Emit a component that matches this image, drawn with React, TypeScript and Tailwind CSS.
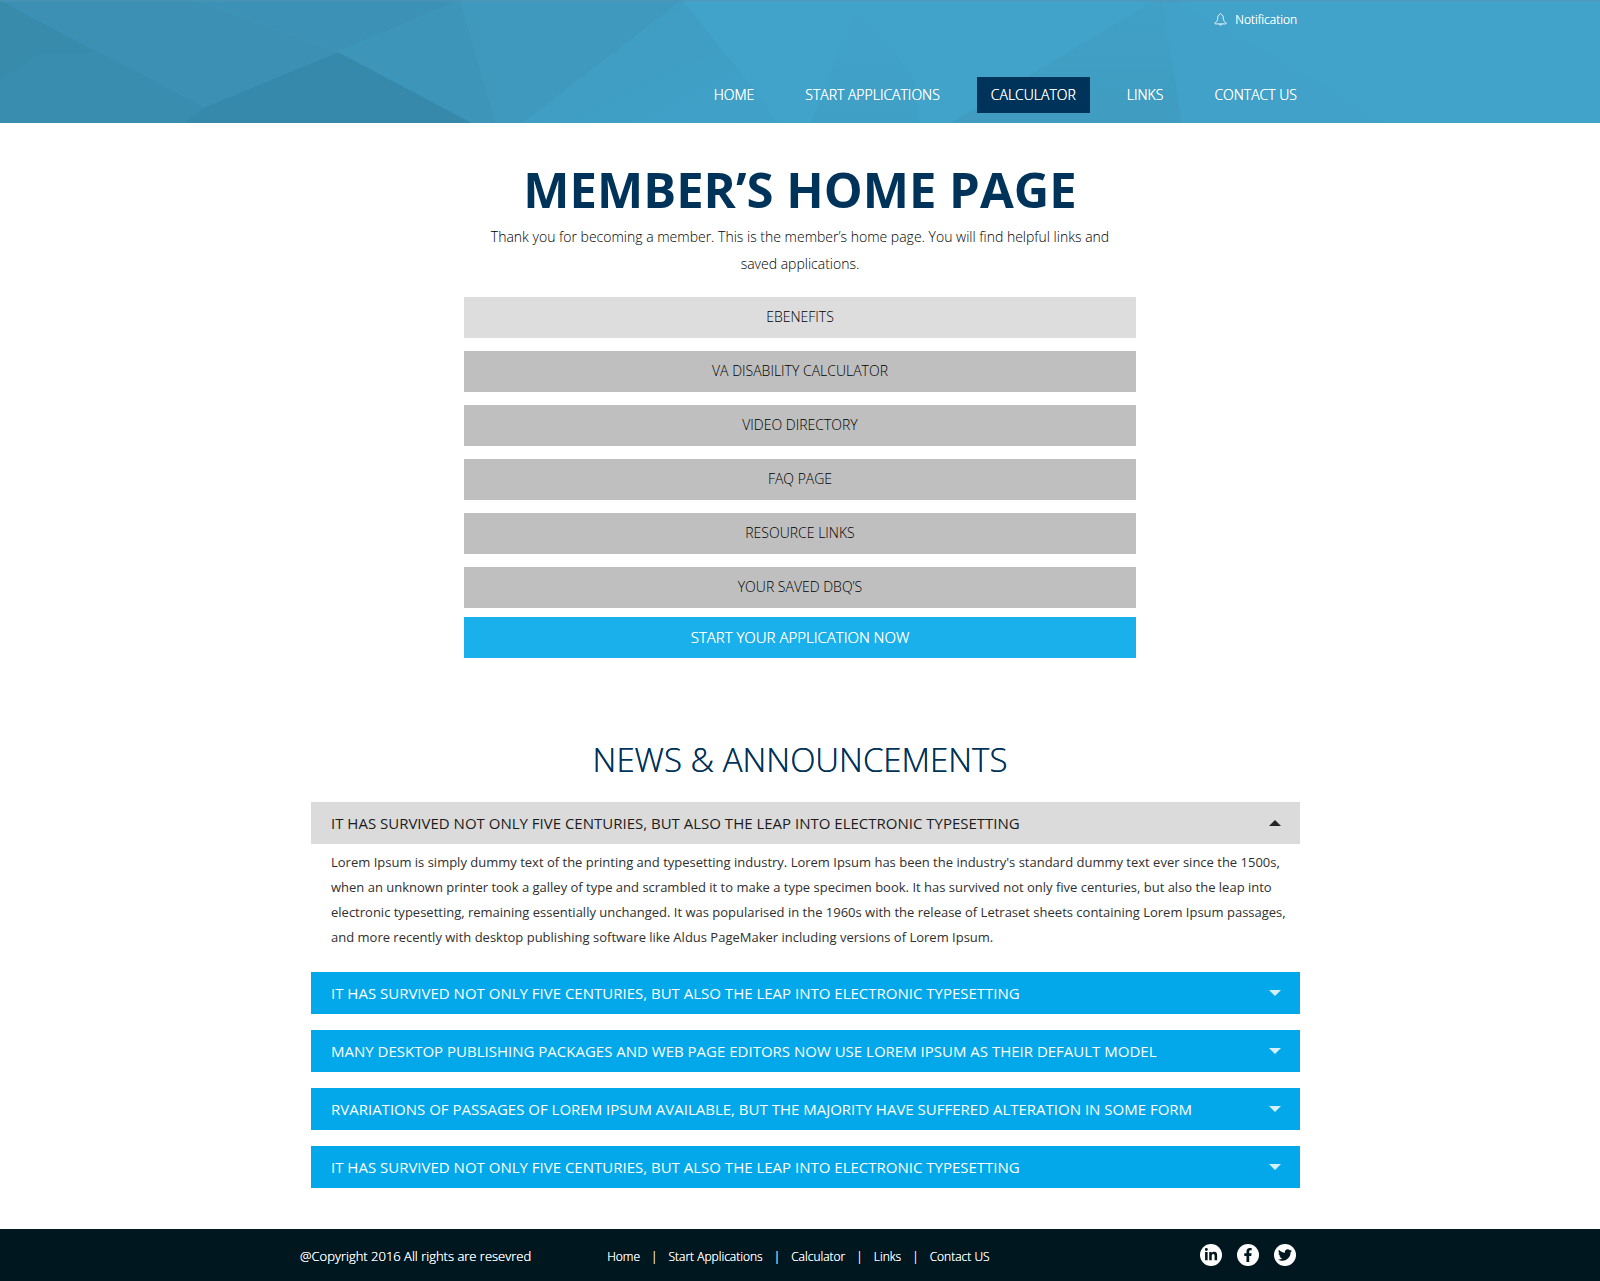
import { useState } from "react";
import { FaFacebookF, FaLinkedinIn, FaTwitter } from "react-icons/fa";

const navItems = [
  { label: "HOME", active: false },
  { label: "START APPLICATIONS", active: false },
  { label: "CALCULATOR", active: true },
  { label: "LINKS", active: false },
  { label: "CONTACT US", active: false },
];

const memberLinks = [
  "EBENEFITS",
  "VA DISABILITY CALCULATOR",
  "VIDEO DIRECTORY",
  "FAQ PAGE",
  "RESOURCE LINKS",
  "YOUR SAVED DBQ’S",
];

const body =
  "Lorem Ipsum is simply dummy text of the printing and typesetting industry. Lorem Ipsum has been the industry's standard dummy text ever since the 1500s, when an unknown printer took a galley of type and scrambled it to make a type specimen book. It has survived not only five centuries, but also the leap into electronic typesetting, remaining essentially unchanged. It was popularised in the 1960s with the release of Letraset sheets containing Lorem Ipsum passages, and more recently with desktop publishing software like Aldus PageMaker including versions of Lorem Ipsum.";

const news = [
  "IT HAS SURVIVED NOT ONLY FIVE CENTURIES, BUT ALSO THE LEAP INTO ELECTRONIC TYPESETTING",
  "IT HAS SURVIVED NOT ONLY FIVE CENTURIES, BUT ALSO THE LEAP INTO ELECTRONIC TYPESETTING",
  "MANY DESKTOP PUBLISHING PACKAGES AND WEB PAGE EDITORS NOW USE LOREM IPSUM AS THEIR DEFAULT MODEL",
  "RVARIATIONS OF PASSAGES OF LOREM IPSUM AVAILABLE, BUT THE MAJORITY HAVE SUFFERED ALTERATION IN SOME FORM",
  "IT HAS SURVIVED NOT ONLY FIVE CENTURIES, BUT ALSO THE LEAP INTO ELECTRONIC TYPESETTING",
];

const footerLinks = ["Home", "Start Applications", "Calculator", "Links", "Contact US"];

const socials = [
  { label: "LinkedIn", Icon: FaLinkedinIn },
  { label: "Facebook", Icon: FaFacebookF },
  { label: "Twitter", Icon: FaTwitter },
];

function Facets() {
  return (
    <svg
      className="absolute inset-0 h-full w-full"
      viewBox="0 0 1600 123"
      preserveAspectRatio="none"
      aria-hidden="true"
    >
      <defs>
        <linearGradient id="slope" x1="0" x2="1" y1="0" y2="1">
          <stop offset="0" stopColor="#409bc0" />
          <stop offset="1" stopColor="#40a1c8" />
        </linearGradient>
        <linearGradient id="shade" x1="0" x2="0" y1="0" y2="1">
          <stop offset="0" stopColor="#42a2c9" />
          <stop offset="1" stopColor="#409fc5" />
        </linearGradient>
        <linearGradient id="fold" x1="0" x2="0" y1="0" y2="1">
          <stop offset="0" stopColor="#41a0c6" />
          <stop offset="1" stopColor="#409cc1" />
        </linearGradient>
      </defs>
      <rect width="1600" height="123" fill="#42a3ca" />
      <polygon points="0,0 205,107 212,123 0,123" fill="#398daf" />
      <polygon points="0,0 95,53 40,53 0,80" fill="#398bac" />
      <polygon points="0,0 195,0 338,52 205,107" fill="#3b90b4" />
      <polygon points="195,0 460,0 338,52" fill="#3c92b6" />
      <polygon points="338,52 460,0 496,123 472,123" fill="#3d96ba" />
      <polygon points="460,0 682,0 523,123 496,123" fill="#3f99be" />
      <polygon points="682,0 755,90 778,123 523,123" fill="url(#slope)" />
      <polygon points="338,52 472,123 185,123 205,107" fill="#3789ab" />
      <polygon points="858,0 915,80 920,123 810,123" fill="url(#shade)" />
      <polygon points="1155,0 1162,0 1182,123 950,123" fill="url(#fold)" />
      <polygon points="1162,0 1175,0 1350,100 1382,123 1182,123" fill="#41a1c8" />
      <rect width="1600" height="2" fill="#5294b3" opacity="0.5" />
    </svg>
  );
}

function BellIcon() {
  return (
    <svg
      className="h-[13px] w-[13px]"
      viewBox="0 0 13 13"
      fill="none"
      stroke="white"
      strokeOpacity="0.85"
      strokeLinejoin="round"
      aria-hidden="true"
    >
      <path d="M5.6 1.5C5.7 0.4 7.3 0.4 7.4 1.5C8.9 2.2 9.3 3.4 9.3 5.2C9.3 7.4 10 8.4 12 9.9C12.6 10.4 12.3 10.9 11.6 10.9H1.4C0.7 10.9 0.4 10.4 1 9.9C3 8.4 3.7 7.4 3.7 5.2C3.7 3.4 4.1 2.2 5.6 1.5Z" />
      <path d="M5.2 11.2C5.5 12.6 7.5 12.6 7.8 11.2" />
    </svg>
  );
}

export default function App() {
  const [open, setOpen] = useState(0);

  return (
    <div className="min-h-screen bg-white font-['Open_Sans',sans-serif]">
      <header className="relative bg-[#42a3ca] text-white [text-shadow:0_0_0_white]">
        <Facets />
        <div className="relative mx-auto flex max-w-[1000px] flex-col items-end pr-[3px] pb-[10px]">
          <a href="#notification" className="flex h-[39px] items-center gap-2 text-xs font-light">
            <BellIcon />
            Notification
          </a>
          <nav className="mt-[38px] flex items-center gap-[51px] text-sm font-light whitespace-nowrap">
            {navItems.map(({ label, active }) => (
              <a
                key={label}
                href="#nav"
                aria-current={active ? "page" : undefined}
                className={
                  active
                    ? "-mx-[14px] flex h-9 items-center bg-[#00335a] px-[14px]"
                    : "flex h-9 items-center"
                }
              >
                {label}
              </a>
            ))}
          </nav>
        </div>
      </header>

      <main>
        <section className="mx-auto max-w-[672px] pt-[34px] text-center">
          <h1 className="text-[49px] leading-[64px] font-bold whitespace-nowrap text-[#00335a]">
            MEMBER’S HOME PAGE
          </h1>
          <p className="mt-0.5 px-6 text-sm leading-[27px] font-light text-black">
            Thank you for becoming a member. This is the member’s home page. You will find helpful
            links and saved applications.
          </p>
          <div className="mt-5 flex flex-col gap-[13px]">
            {memberLinks.map((label, i) => (
              <a
                key={label}
                href="#member"
                className={
                  i === 0
                    ? "flex h-[41px] items-center justify-center bg-[#dddddd] pb-0.5 text-sm font-light text-black"
                    : "flex h-[41px] items-center justify-center bg-[#bfbfbf] pb-0.5 text-sm font-light text-black"
                }
              >
                {label}
              </a>
            ))}
          </div>
          <button
            type="button"
            className="mt-[9px] flex h-[41px] w-full items-center justify-center bg-[#19b0ec] text-[15px] font-light text-white [text-shadow:0_0_0_white]"
          >
            START YOUR APPLICATION NOW
          </button>
        </section>

        <section className="mx-auto max-w-[1000px] pt-[76px] pb-[41px]">
          <h2 className="text-center text-[33px] leading-[52px] font-light text-[#00335a] [text-shadow:0_0_0_#00335a]">
            NEWS &amp; ANNOUNCEMENTS
          </h2>
          <div className="mt-4 flex flex-col gap-4 pl-[11px]">
            {news.map((title, i) => {
              const isOpen = open === i;
              return (
                <div key={i}>
                  <button
                    type="button"
                    aria-expanded={isOpen}
                    onClick={() => setOpen(isOpen ? -1 : i)}
                    className={
                      isOpen
                        ? "flex h-[42px] w-full items-center justify-between bg-[#dbdbdb] pr-[19px] pl-5 text-left text-[15px] text-[#1c1c1c]"
                        : "flex h-[42px] w-full items-center justify-between bg-[#02a8e9] pr-[19px] pl-5 text-left text-[15px] text-white"
                    }
                  >
                    {title}
                    <svg className="h-[6px] w-3" viewBox="0 0 12 6" aria-hidden="true">
                      {isOpen ? (
                        <path d="M0 6L6 0L12 6Z" fill="#262626" />
                      ) : (
                        <path d="M0 0H12L6 6Z" fill="#d6f0fb" />
                      )}
                    </svg>
                  </button>
                  {isOpen && (
                    <p className="pt-[6px] pr-3 pb-[6px] pl-5 text-[13px] leading-[25px] text-[#2f2f2f]">
                      {body}
                    </p>
                  )}
                </div>
              );
            })}
          </div>
        </section>
      </main>

      <footer className="bg-[#00171f] text-white [text-shadow:0_0_0_white]">
        <div className="mx-auto flex h-[52px] max-w-[1000px] items-center justify-between pr-1">
          <div className="flex items-center gap-[76px] pt-1 font-light whitespace-nowrap">
            <p className="text-[13px]">@Copyright 2016 All rights are resevred</p>
            <nav className="flex items-center gap-[11px] text-xs">
              {footerLinks.map((label, i) => (
                <div key={label} className="flex items-center gap-[11px]">
                  {i > 0 && <span aria-hidden="true">|</span>}
                  <a href="#footer">{label}</a>
                </div>
              ))}
            </nav>
          </div>
          <div className="flex items-center gap-[15px]">
            {socials.map(({ label, Icon }) => (
              <a
                key={label}
                href="#social"
                aria-label={label}
                className="flex size-[22px] items-center justify-center rounded-full bg-white text-[#00171f]"
              >
                <Icon className="size-[14px]" />
              </a>
            ))}
          </div>
        </div>
      </footer>
    </div>
  );
}
